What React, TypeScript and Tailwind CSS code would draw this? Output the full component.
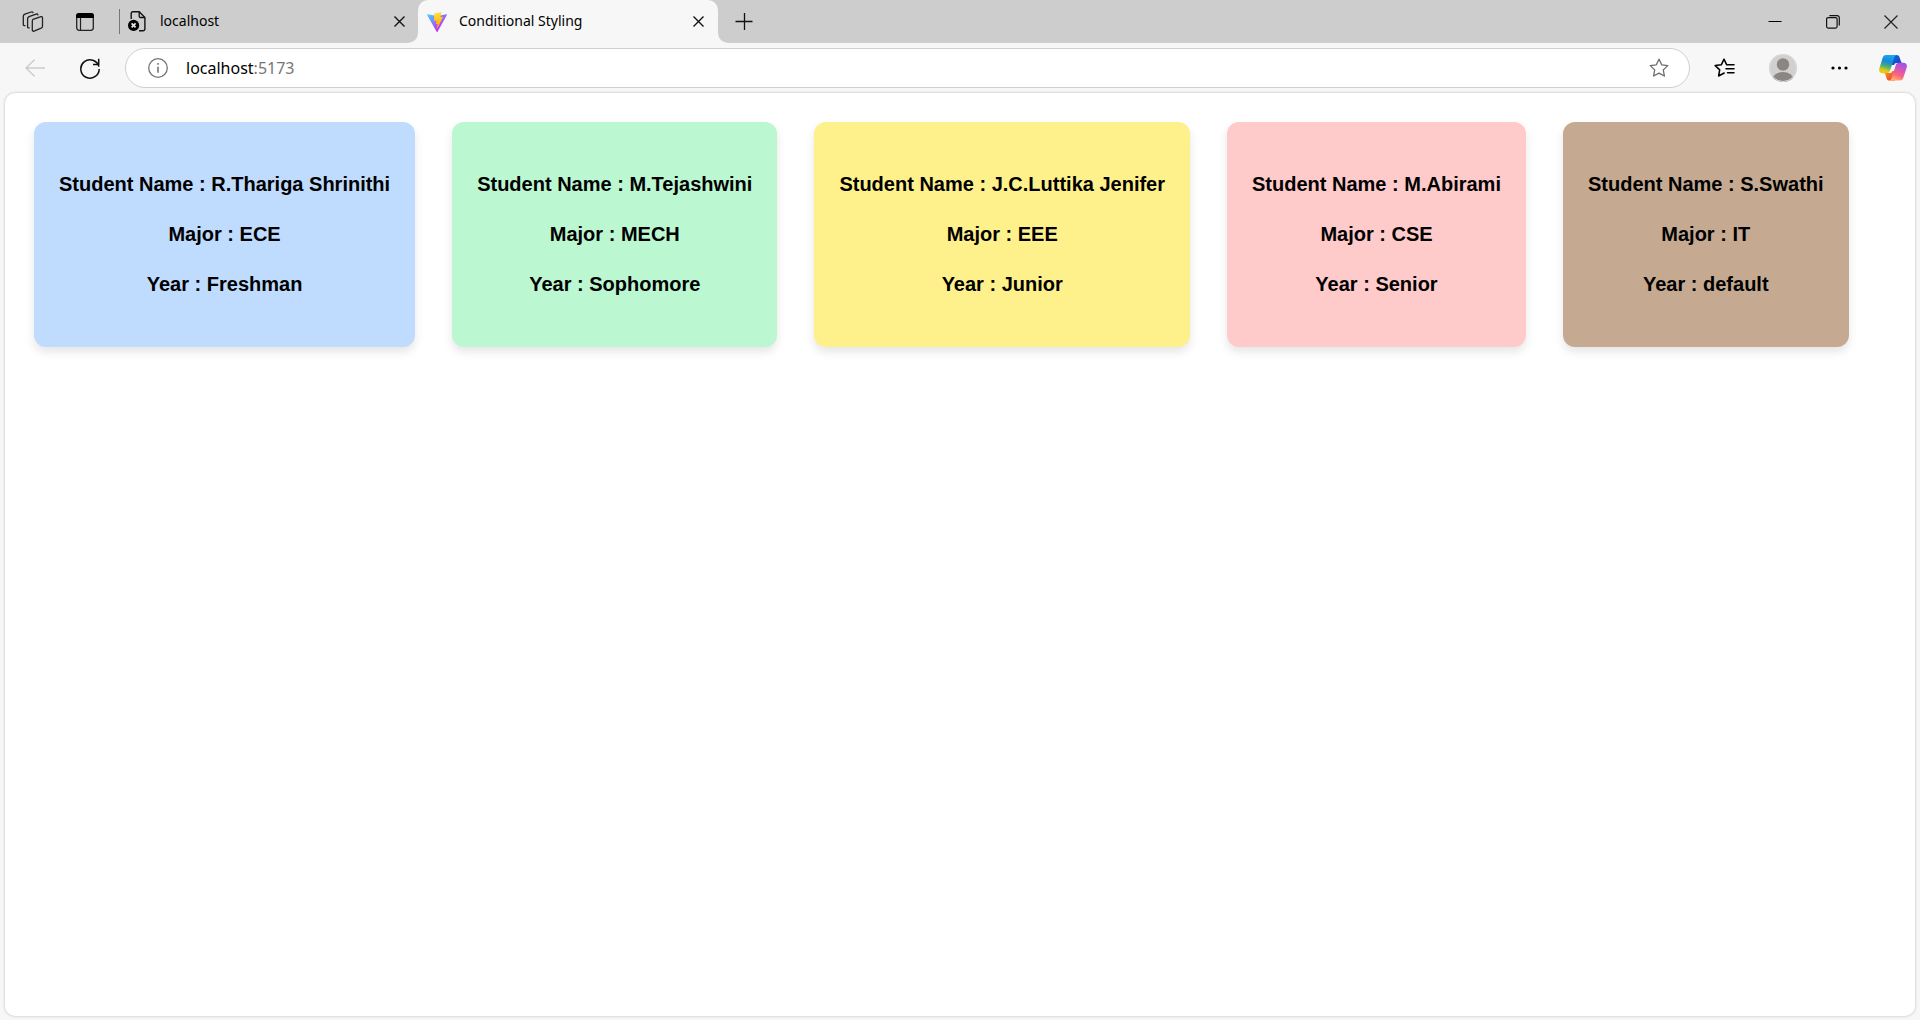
import type { ReactNode } from "react";

type Student = { name: string; major: string; year: string; color: string };

const students: Student[] = [
  { name: "R.Thariga Shrinithi", major: "ECE", year: "Freshman", color: "bg-[#bfdbfe]" },
  { name: "M.Tejashwini", major: "MECH", year: "Sophomore", color: "bg-[#bbf7d0]" },
  { name: "J.C.Luttika Jenifer", major: "EEE", year: "Junior", color: "bg-[#fef08a]" },
  { name: "M.Abirami", major: "CSE", year: "Senior", color: "bg-[#fecaca]" },
  { name: "S.Swathi", major: "IT", year: "default", color: "bg-[#c5aa91]" },
];

function IconButton({ label, className = "", children }: { label: string; className?: string; children: ReactNode }) {
  return (
    <button type="button" aria-label={label} className={`flex shrink-0 items-center justify-center ${className}`}>
      {children}
    </button>
  );
}

function Cross({ size = 11 }: { size?: number }) {
  return (
    <svg width={size} height={size} viewBox="0 0 11 11" fill="none" stroke="#111" strokeWidth="1.4">
      <path d="M.5.5l10 10M10.5.5l-10 10" />
    </svg>
  );
}

function WorkspacesIcon() {
  return (
    <svg width="22" height="22" viewBox="0 0 22 22" fill="none" stroke="#222" strokeWidth="1.3" strokeLinecap="round" strokeLinejoin="round">
      <path d="M11 8.400l8-2.700c.9-.3 1.500.2 1.500 1.100v8.400c0 1-.4 1.600-1.300 2l-7.200 2.900c-1 .4-1.700-.1-1.700-1.100v-8.600c0-1 0-1.700.7-2z" />
      <path d="M7.200 16.900c-1 .2-1.600-.3-1.600-1.200V7.900c0-1.200.5-1.900 1.500-2.300l7-2.500c1-.3 1.700 0 1.800.8" />
      <path d="M3 14.600c-1 .2-1.700-.3-1.700-1.200V5.500c0-1.200.5-1.900 1.500-2.300l6.500-2.200c.9-.3 1.600 0 1.700.7" />
    </svg>
  );
}

function TabActionsIcon() {
  return (
    <svg width="18" height="18" viewBox="0 0 18 18" fill="none">
      <rect x=".7" y=".7" width="16.600" height="16.600" rx="2.500" stroke="#222" strokeWidth="1.3" />
      <path d="M0 5V3a3 3 0 013-3h12a3 3 0 013 3v2z" fill="#000" />
      <path d="M4.500 5v12" stroke="#222" strokeWidth="1.200" />
    </svg>
  );
}

function ErrorPageIcon() {
  return (
    <svg width="18" height="21" viewBox="0 0 18 21" fill="none">
      <path d="M3.200 8V2.500c0-1 .7-1.700 1.700-1.700h6.300l5.700 5.700v11.600c0 1-.7 1.700-1.700 1.700H11" stroke="#111" strokeWidth="1.400" />
      <path d="M11.200 1v4.200c0 .8.500 1.300 1.300 1.300h4.300" stroke="#111" strokeWidth="1.300" />
      <circle cx="5.600" cy="14.400" r="5.600" fill="#000" />
      <path d="M3.600 12.400l4 4M7.600 12.400l-4 4" stroke="#e4e4e4" strokeWidth="1.700" />
    </svg>
  );
}

function ViteIcon() {
  return (
    <svg width="20" height="20" viewBox="0 0 256 257">
      <defs>
        <linearGradient id="viteBody" x1="-.828%" x2="57.636%" y1="7.652%" y2="78.411%">
          <stop offset="0%" stopColor="#41D1FF" />
          <stop offset="100%" stopColor="#BD34FE" />
        </linearGradient>
        <linearGradient id="viteBolt" x1="43.376%" x2="50.316%" y1="2.242%" y2="89.030%">
          <stop offset="0%" stopColor="#FFEA83" />
          <stop offset="8.333%" stopColor="#FFDD35" />
          <stop offset="100%" stopColor="#FFA800" />
        </linearGradient>
      </defs>
      <path fill="url(#viteBody)" d="M255.153 37.938L134.897 252.976c-2.483 4.440-8.862 4.466-11.382.048L.875 37.958c-2.746-4.814 1.371-10.646 6.827-9.670l120.385 21.517a6.537 6.537 0 0 0 2.322-.004l117.867-21.483c5.438-.991 9.574 4.796 6.877 9.620Z" />
      <path fill="url(#viteBolt)" d="M185.432.063L96.440 17.501a3.268 3.268 0 0 0-2.634 3.014l-5.474 92.456a3.268 3.268 0 0 0 3.997 3.378l24.777-5.718c2.318-.535 4.413 1.507 3.936 3.838l-7.361 36.047c-.495 2.426 1.782 4.500 4.151 3.780l15.304-4.649c2.372-.720 4.652 1.360 4.150 3.788l-11.698 56.621c-.732 3.542 3.979 5.473 5.943 2.437l1.313-2.028l72.516-144.720c1.215-2.423-.880-5.186-3.540-4.672l-25.505 4.922c-2.396.462-4.435-1.770-3.759-4.114l16.646-57.705c.677-2.350-1.370-4.583-3.769-4.113Z" />
    </svg>
  );
}

function CopilotIcon() {
  return (
    <svg width="28" height="26" viewBox="0 0 28 26">
      <defs>
        <linearGradient id="copLeft" x1=".6" y1="0" x2=".35" y2="1">
          <stop offset="0" stopColor="#18a8f5" />
          <stop offset=".35" stopColor="#1688dc" />
          <stop offset=".62" stopColor="#42ad79" />
          <stop offset=".85" stopColor="#d8c91c" />
          <stop offset="1" stopColor="#f7c80c" />
        </linearGradient>
        <linearGradient id="copRight" x1=".8" y1="0" x2=".4" y2="1">
          <stop offset="0" stopColor="#9c50f2" />
          <stop offset=".4" stopColor="#d455bb" />
          <stop offset=".7" stopColor="#fa6380" />
          <stop offset="1" stopColor="#ffae66" />
        </linearGradient>
        <linearGradient id="copTop" x1="0" y1="0" x2="1" y2="1">
          <stop offset="0" stopColor="#1766dc" />
          <stop offset="1" stopColor="#1540bd" />
        </linearGradient>
        <linearGradient id="copBottom" x1="0" y1="0" x2="1" y2="1">
          <stop offset="0" stopColor="#f79a21" />
          <stop offset="1" stopColor="#e9363f" />
        </linearGradient>
      </defs>
      <path fill="url(#copTop)" d="M12 0h5.500c1.700 0 2.500.7 3 2.200l1.500 4.300c.3 1 .8 1.500 1.800 1.500h-6.300c-1.400 0-2 .7-2.400 2L12 10z" />
      <path fill="url(#copBottom)" d="M16 25.500h-5.500c-1.700 0-2.500-.8-3-2.300l-1-3.400c-.4-1.200-1-1.700-2-1.700h6.500c1.400 0 2-.7 2.400-2L17 16z" />
      <path fill="url(#copLeft)" d="M7 0h11c-1.600.2-2.300 1.300-2.800 3l-4 12.300c-.6 2-1.600 2.900-3.500 2.900H3.500C.7 18.200-.4 16.200.3 13.500L3.600 3C4.200 1 5.200 0 7 0z" />
      <path fill="url(#copRight)" d="M21 25.500H10c1.600-.2 2.300-1.300 2.800-3l3.800-11.800c.6-2 1.700-2.900 3.600-2.900h4.300c2.800 0 3.900 2 3.200 4.700l-3.300 10c-.6 2-1.600 3-3.400 3z" />
    </svg>
  );
}

function TabStrip() {
  return (
    <header className="flex h-[43px] shrink-0 bg-[#f7f7f7]">
      <div className="flex w-[418px] shrink-0 items-center rounded-br-[10px] bg-[#cdcdcd] pl-[22px]">
        <IconButton label="Workspaces" className="w-[22px]"><WorkspacesIcon /></IconButton>
        <IconButton label="Tab actions" className="ml-8 w-[18px]"><TabActionsIcon /></IconButton>
        <div className="ml-[25px] h-[25px] w-px bg-[#777]" />
        <div className="ml-2 flex flex-1 items-center pr-[13px]">
          <ErrorPageIcon />
          <span className="ml-[14px] flex-1 pb-0.5 text-sm text-black">localhost</span>
          <IconButton label="Close localhost"><Cross /></IconButton>
        </div>
      </div>
      <div className="w-[300px] shrink-0 bg-[#cdcdcd]">
        <div className="flex h-full items-center rounded-t-[10px] bg-[#f7f7f7] pr-[14px] pl-[9px]">
          <ViteIcon />
          <span className="ml-3 flex-1 pb-0.5 text-sm text-black">Conditional Styling</span>
          <IconButton label="Close Conditional Styling"><Cross /></IconButton>
        </div>
      </div>
      <div className="flex flex-1 items-center rounded-bl-[10px] bg-[#cdcdcd] pr-[22px] pl-[17px]">
        <IconButton label="New tab">
          <svg width="18" height="18" viewBox="0 0 18 18" stroke="#111" strokeWidth="1.3"><path d="M.5 8.500h17M9.500 0v17" /></svg>
        </IconButton>
        <div className="ml-auto flex items-center gap-11">
          <IconButton label="Minimize">
            <svg width="14" height="14" viewBox="0 0 14 14" stroke="#000" strokeWidth="1"><path d="M.5 6.500h13" /></svg>
          </IconButton>
          <IconButton label="Restore">
            <svg width="14" height="14" viewBox="0 0 14 14" fill="none" stroke="#111" strokeWidth="1.200">
              <rect x=".6" y="2.600" width="10.500" height="10.500" rx="1.500" />
              <path d="M3.400.6h7.700a2.200 2.200 0 012.200 2.200v7.700" />
            </svg>
          </IconButton>
          <IconButton label="Close window">
            <svg width="14" height="14" viewBox="0 0 14 14" stroke="#222" strokeWidth="1.200"><path d="M.5.5l13 13M13.500.5l-13 13" /></svg>
          </IconButton>
        </div>
      </div>
    </header>
  );
}

const starPath = "M10 1.200l2.700 5.600 6.100.8-4.500 4.300 1.100 6.100L10 15.100 4.600 18l1.100-6.100L1.200 7.600l6.100-.8z";

function Toolbar() {
  return (
    <nav className="flex h-[50px] shrink-0 items-center bg-[#f7f7f7] pr-[13px] pl-[25px]">
      <IconButton label="Back">
        <svg width="20" height="18" viewBox="0 0 20 18" fill="none" stroke="#cbcbcb" strokeWidth="1.400"><path d="M20 9H1M9.500.8L1 9l8.500 8.200" /></svg>
      </IconButton>
      <IconButton label="Refresh" className="ml-[35px]">
        <svg width="20" height="21" viewBox="0 0 20 21" fill="none" stroke="#111" strokeWidth="1.500">
          <path d="M18.900 8.600A9.200 9.200 0 1019.200 11" />
          <path d="M18.700.8v5.700H13" />
        </svg>
      </IconButton>
      <div className="ml-[25px] flex h-10 flex-1 items-center rounded-full border border-[#cfcfcf] bg-white pr-5 pl-[22px]">
        <IconButton label="Site information">
          <svg width="20" height="20" viewBox="0 0 20 20" fill="none" stroke="#767676" strokeWidth="1.300">
            <circle cx="10" cy="10" r="9.300" />
            <path d="M10 8.700v6M10 5v1.800" strokeWidth="1.600" />
          </svg>
        </IconButton>
        <div className="ml-[18px] flex-1 text-base">
          <span className="text-black">localhost</span>
          <span className="text-[#767676]">:5173</span>
        </div>
        <IconButton label="Add to favorites">
          <svg width="20" height="20" viewBox="0 0 20 20" fill="none" stroke="#6b6b6b" strokeWidth="1.300" strokeLinejoin="round"><path d={starPath} /></svg>
        </IconButton>
      </div>
      <IconButton label="Favorites" className="ml-6">
        <svg width="21" height="20" viewBox="0 0 21 20" fill="none" stroke="#000" strokeWidth="1.500" strokeLinejoin="round" strokeLinecap="round">
          <path d="M13.400 6.800h-.7L10 1.200 7.300 6.800l-6.100.8 4.500 4.300L4.600 18l5.600-3" />
          <path d="M14 6.800h6M12 10.800h8M13.500 14.800H20" />
        </svg>
      </IconButton>
      <IconButton label="Profile" className="ml-[34px]">
        <svg width="28" height="28" viewBox="0 0 28 28">
          <defs><clipPath id="avatar"><circle cx="14" cy="14" r="14" /></clipPath></defs>
          <g clipPath="url(#avatar)">
            <rect width="28" height="28" fill="#d2d0ce" />
            <circle cx="14" cy="10.500" r="6.200" fill="#8a8683" />
            <ellipse cx="14" cy="25.500" rx="10.500" ry="7.500" fill="#8a8683" />
          </g>
          <circle cx="14" cy="14" r="13.500" fill="none" stroke="#dddbd9" />
        </svg>
      </IconButton>
      <IconButton label="Settings and more" className="ml-[34px]">
        <svg width="18" height="4" viewBox="0 0 18 4"><circle cx="2" cy="2" r="1.600" /><circle cx="8.500" cy="2" r="1.600" /><circle cx="15" cy="2" r="1.600" /></svg>
      </IconButton>
      <IconButton label="Copilot" className="ml-[30px]"><CopilotIcon /></IconButton>
    </nav>
  );
}

function StudentCard({ name, major, year, color }: Student) {
  return (
    <article className={`flex flex-col gap-[25px] rounded-xl px-[25px] py-[50px] text-center text-xl leading-[25px] font-bold whitespace-nowrap text-black shadow-[0_5px_10px_rgba(0,0,0,0.1)] ${color}`}>
      <p>Student Name : {name}</p>
      <p>Major : {major}</p>
      <p>Year : {year}</p>
    </article>
  );
}

export default function App() {
  return (
    <div className="flex min-h-screen flex-col bg-[#f7f7f7] font-['Noto_Sans',sans-serif]">
      <TabStrip />
      <Toolbar />
      <main className="mx-[5px] mb-1 flex flex-1 flex-wrap content-start items-start gap-[37px] rounded-[10px] bg-white px-[29px] pt-[29px] font-['Liberation_Sans',Arial,sans-serif] shadow-[0_0_3px_rgba(0,0,0,0.25)]">
        {students.map((student) => (
          <StudentCard key={student.name} {...student} />
        ))}
      </main>
    </div>
  );
}
